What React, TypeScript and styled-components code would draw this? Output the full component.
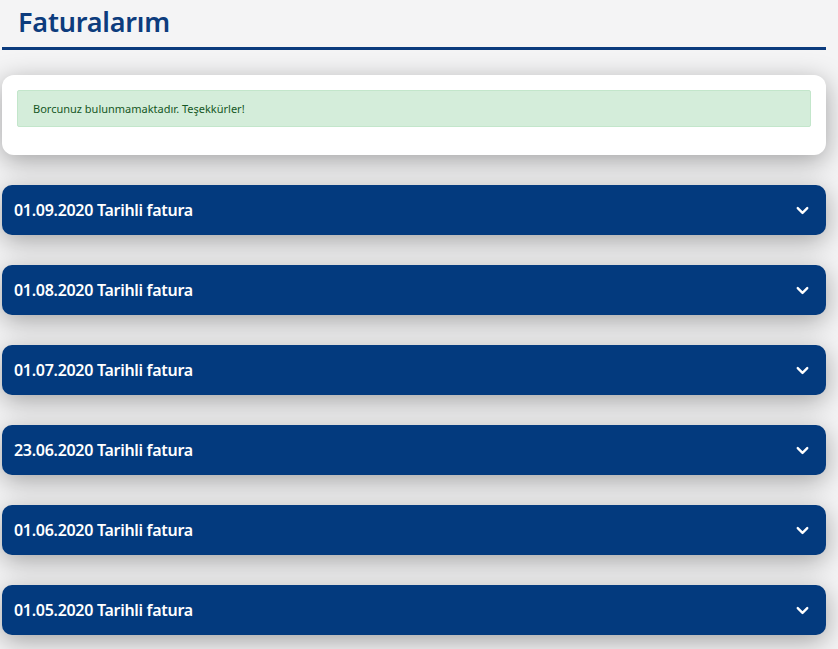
import styled, { createGlobalStyle } from 'styled-components';
import { ChevronDown } from 'lucide-react';

const GlobalStyle = createGlobalStyle`
  html, body {
    margin: 0;
    padding: 0;
    background: #f4f4f5;
    font-family: "Noto Sans", "Open Sans", Arial, sans-serif;
  }
  * { box-sizing: border-box; }
`;

const Page = styled.main`
  width: 824px;
  margin-left: 2px;
  padding-bottom: 30px;
`;

const Header = styled.header`
  height: 50px;
  border-bottom: 3px solid #0b3b7d;
  display: flex;
  align-items: center;
  padding: 0 16px 4px;
`;

const Title = styled.h1`
  margin: 0;
  font-size: 27px;
  font-weight: 600;
  color: #0d3c7d;
  letter-spacing: -0.2px;
`;

const List = styled.div`
  display: flex;
  flex-direction: column;
  gap: 30px;
  padding-top: 25px;
`;

const Card = styled.section`
  background: #fff;
  border-radius: 12px;
  height: 80px;
  padding: 15px;
  box-shadow: 0 6px 26px rgba(0, 0, 0, 0.34);
`;

const Alert = styled.div`
  background: #d4edda;
  border: 1px solid #c3e6cb;
  color: #155724;
  font-size: 11px;
  line-height: 15px;
  padding: 10px 15px;
  border-radius: 2px;
`;

const AccordionHeader = styled.button`
  all: unset;
  height: 50px;
  background: #033a7e;
  border-radius: 10px;
  display: flex;
  align-items: center;
  justify-content: space-between;
  padding: 0 14px 0 12px;
  color: #fff;
  font-family: "Noto Sans", "Open Sans", Arial, sans-serif;
  font-size: 16px;
  font-weight: 600;
  letter-spacing: -0.3px;
  box-shadow: 0 6px 26px rgba(0, 0, 0, 0.34);
  cursor: pointer;
`;

const invoices = [
  '01.09.2020',
  '01.08.2020',
  '01.07.2020',
  '23.06.2020',
  '01.06.2020',
  '01.05.2020',
];

export default function App() {
  return (
    <>
      <GlobalStyle />
      <Page>
        <Header>
          <Title>Faturalarım</Title>
        </Header>
        <List>
          <Card>
            <Alert>Borcunuz bulunmamaktadır. Teşekkürler!</Alert>
          </Card>
          {invoices.map((d) => (
            <AccordionHeader key={d}>
              <span>{d} Tarihli fatura</span>
              <ChevronDown size={19} strokeWidth={3} />
            </AccordionHeader>
          ))}
        </List>
      </Page>
    </>
  );
}
